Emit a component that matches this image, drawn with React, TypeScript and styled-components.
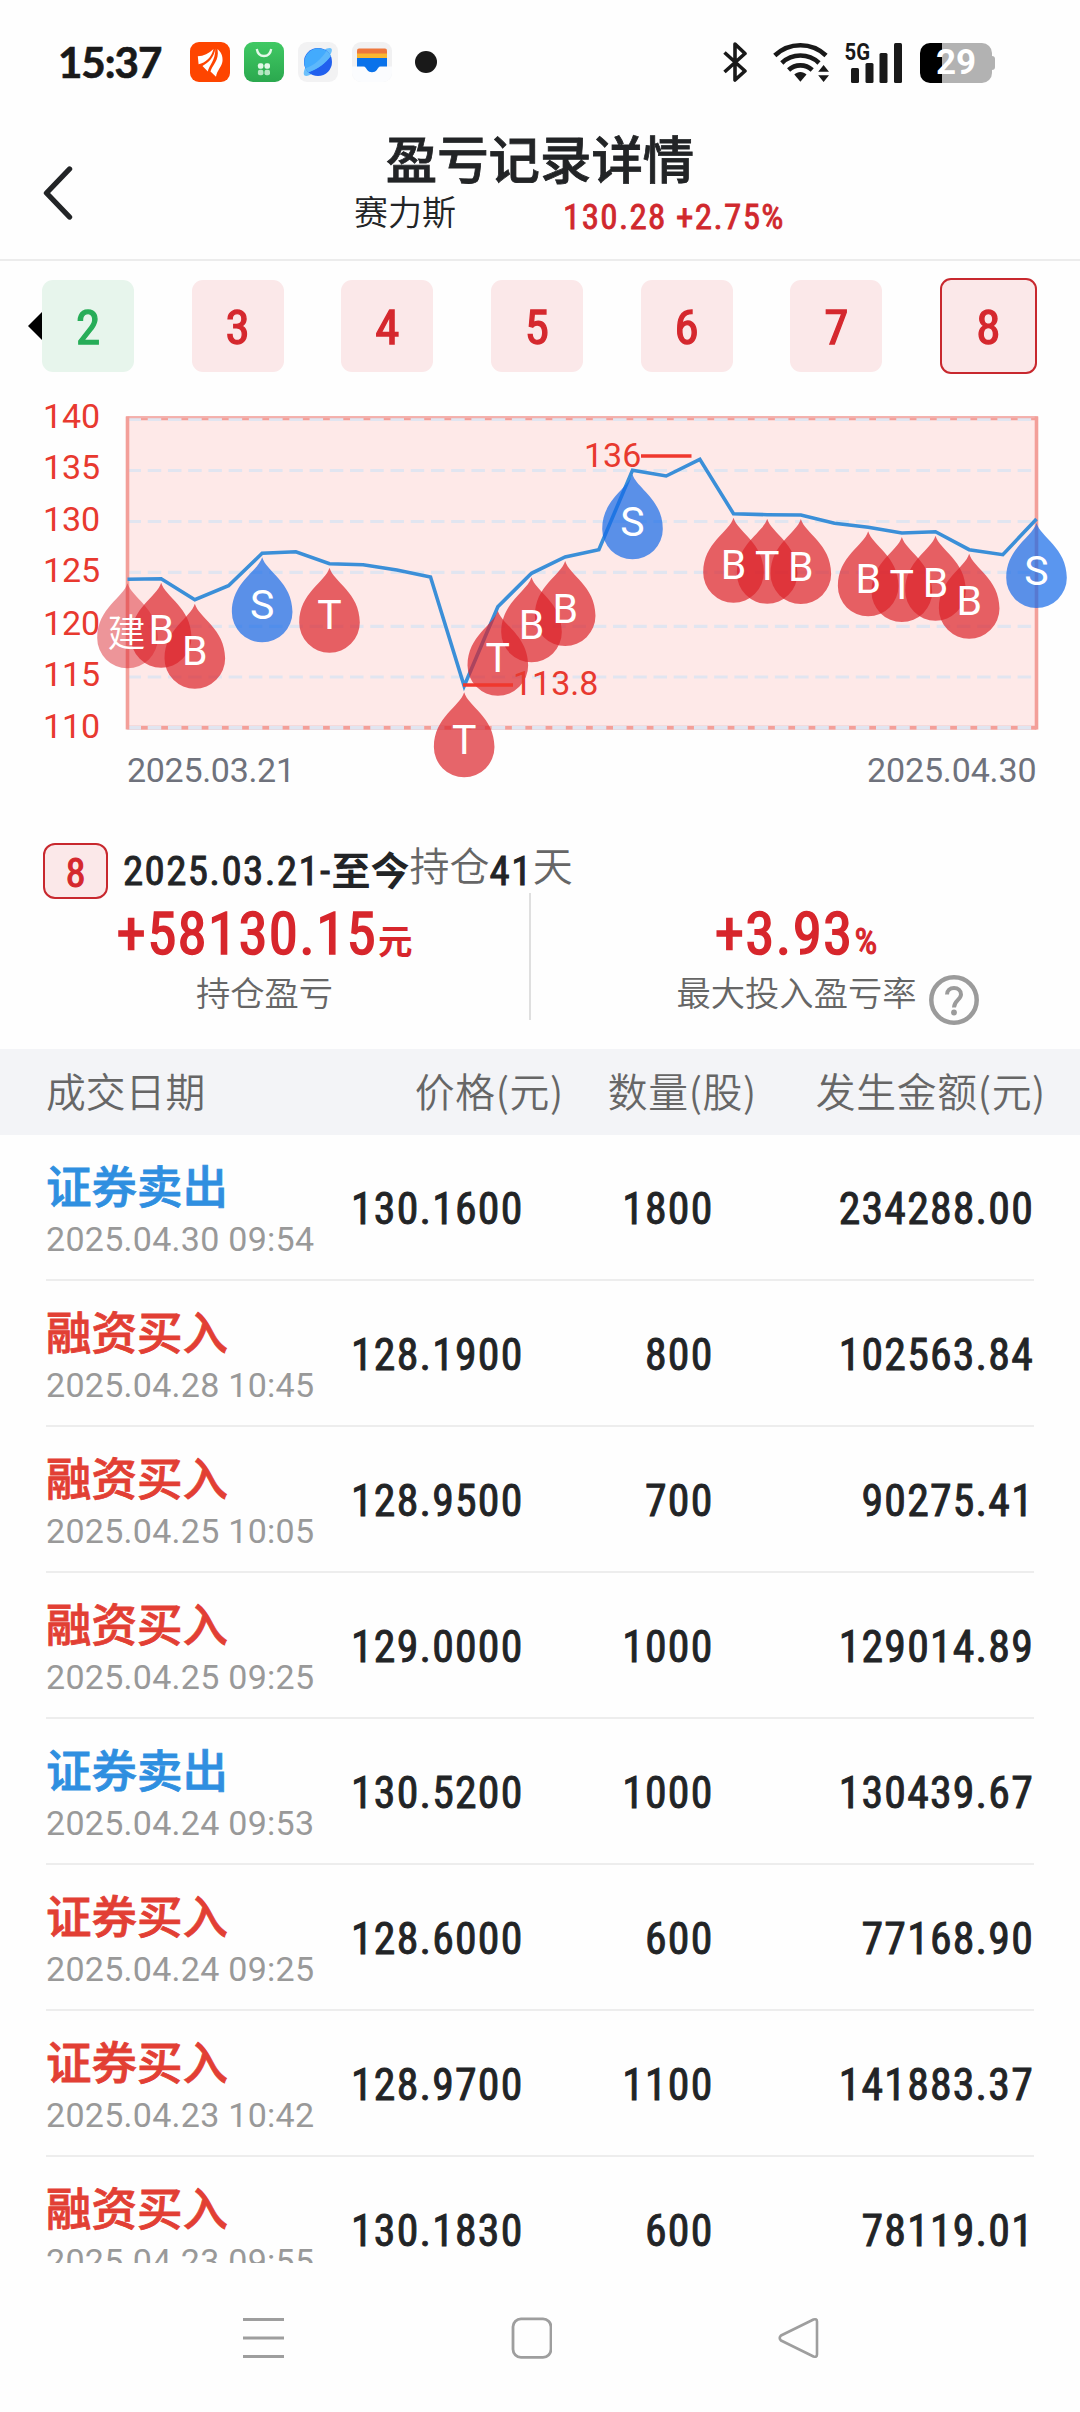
import React from 'react';
import styled, { createGlobalStyle, css } from 'styled-components';

const latin = 'Roboto, "Noto Sans CJK SC", sans-serif';
const han = '"Noto Sans CJK SC", sans-serif';

const GlobalStyle = createGlobalStyle`
  *, *::before, *::after { box-sizing: border-box; }
  html, body { margin: 0; padding: 0; background: #fefefe; }
  body { font-family: ${latin}; color: #222426; }
`;

/* narrow figures, a little heavier than regular */
const figures = (size: number, line: number, spacing: number, weight = 1) => css`
  font: 400 ${size}px/${line}px ${latin};
  font-stretch: 75%;
  letter-spacing: ${spacing}px;
  -webkit-text-stroke: ${weight}px currentColor;
`;

const Screen = styled.main`
  width: 1080px;
  height: 2412px;
  overflow: hidden;
  display: flex;
  flex-direction: column;
  background: #fefefe;
`;

/* ---------- status bar ---------- */
const StatusBar = styled.div`
  height: 124px;
  flex: none;
  display: flex;
  align-items: center;
  padding: 0 85px 0 58px;
`;
const Clock = styled.span`
  width: 132px;
  font: 700 42px/50px Lato, sans-serif;
  letter-spacing: -1px;
  color: #191919;
  -webkit-text-stroke: 0.7px #191919;
`;
const AppIcons = styled.div`
  display: flex;
  align-items: center;
  gap: 14px;
`;
const MoreDot = styled.span`
  width: 22px;
  height: 22px;
  margin-left: 9px;
  border-radius: 50%;
  background: #191919;
`;
const SystemIcons = styled.div`
  margin-left: auto;
  display: flex;
  align-items: center;
`;
const Slot = styled.div<{ $after: number }>`
  display: flex;
  margin-right: ${p => p.$after}px;
`;
const Battery = styled.div`
  display: flex;
  align-items: center;
  margin-top: 1px;
`;
const BatteryBody = styled.div`
  width: 72px;
  height: 40px;
  border-radius: 10px;
  background: linear-gradient(90deg, #000 22px, #b2b2b2 22px);
  color: #fff;
  font: 700 35px/40px Roboto, sans-serif;
  text-align: center;
`;
const BatteryTip = styled.div`
  width: 3px;
  height: 14px;
  border-radius: 0 4px 4px 0;
  background: #b2b2b2;
`;

/* ---------- title bar ---------- */
const TitleBar = styled.header`
  height: 137px;
  flex: none;
  display: grid;
  grid-template-columns: 100px 1fr 100px;
  border-bottom: 2px solid #ececec;
`;
const BackButton = styled.button`
  border: 0;
  padding: 2px 0 0 43px;
  background: none;
  display: flex;
  align-items: center;
`;
const TitleBlock = styled.div`
  display: flex;
  flex-direction: column;
  padding-top: 3px;
`;
const Title = styled.h1`
  margin: 0;
  font: 500 51.4px/60px ${han};
  -webkit-text-stroke: 0.8px currentColor;
  text-align: center;
  white-space: nowrap;
`;
const Quote = styled.div`
  display: flex;
  padding-left: 254px;
  gap: 107px;
`;
const StockName = styled.span`
  font: 350 34px/48px ${han};
`;
const StockPrice = styled.span`
  ${figures(35, 62, 1.35, 0.8)}
  color: #d0282d;
`;

/* ---------- round tabs ---------- */
const TabStrip = styled.nav`
  height: 113px;
  flex: none;
  padding: 17px 43px 0 28px;
  display: flex;
  align-items: center;
`;
const Tabs = styled.div`
  flex: 1;
  display: flex;
  align-items: center;
  justify-content: space-between;
`;
const Tab = styled.button<{ $tone: 'gain' | 'loss'; $active?: boolean }>`
  width: ${p => (p.$active ? 97 : 92)}px;
  height: ${p => (p.$active ? 96 : 92)}px;
  padding: 3px 0 0;
  border: ${p => (p.$active ? '2px solid #c8282e' : '0')};
  border-radius: 11px;
  background: ${p => (p.$tone === 'gain' ? '#fbe8e9' : '#e7f5ec')};
  color: ${p => (p.$tone === 'gain' ? '#d5282e' : '#27ad58')};
  ${figures(49, 50, 0, 1.3)}
`;

const Chart = styled.svg`
  display: block;
  flex: none;
`;

/* ---------- holding summary ---------- */
const Period = styled.div`
  height: 55px;
  flex: none;
  margin-top: 33px;
  padding-left: 43px;
  display: flex;
  align-items: center;
`;
const PeriodBadge = styled.span`
  width: 65px;
  height: 56px;
  margin-right: 15px;
  padding-top: 4px;
  border: 2px solid #c8282e;
  border-radius: 12px;
  background: #fbe8e9;
  color: #d5282e;
  ${figures(40, 50, 0, 1.1)}
  text-align: center;
`;
const PeriodNumber = styled.span`
  ${figures(41, 55, 1.35, 0.9)}
  padding-top: 1px;
`;
const PeriodNow = styled.span`
  font: 700 39px/55px ${han};
  padding-bottom: 4px;
`;
const PeriodWord = styled.span`
  font: 350 40px/55px ${han};
  color: #666;
  padding-bottom: 12px;
`;
const Stats = styled.section`
  height: 127px;
  flex: none;
  margin: -5px 0 29px;
  display: grid;
  grid-template-columns: 529px 2px 530px;
  grid-template-rows: 127px;
`;
const Stat = styled.div`
  padding-top: 6px;
  display: flex;
  flex-direction: column;
  align-items: center;
`;
const Divider = styled.div`
  background: #dfdfdf;
`;
const StatValue = styled.div`
  display: flex;
  align-items: baseline;
  color: #d7262c;
  ${figures(59, 70, 1.3, 1.5)}
`;
const StatUnit = styled.span<{ $han?: boolean }>`
  margin-left: 1px;
  font: ${p => (p.$han ? `700 34.5px/34px ${han}` : `400 36px/36px ${latin}`)};
  font-stretch: ${p => (p.$han ? 'normal' : '80%')};
  letter-spacing: 0;
  -webkit-text-stroke: ${p => (p.$han ? 0 : 1)}px currentColor;
`;
const StatLabel = styled.div`
  display: flex;
  align-items: flex-start;
  font: 350 34.3px/45px ${han};
  color: #666;
`;
const HelpIcon = styled.svg`
  margin: 6px -63px 0 12px;
`;

/* ---------- trades ---------- */
const TableHead = styled.div`
  height: 86px;
  flex: none;
  padding: 0 34px 4px 46px;
  display: grid;
  grid-template-columns: 200px 318px 193px 289px;
  align-items: center;
  background: #f3f4f7;
  color: #666;
  font: 350 39.8px/60px ${han};
`;
const HeadCell = styled.span<{ $right?: boolean }>`
  text-align: ${p => (p.$right ? 'right' : 'left')};
  letter-spacing: ${p => (p.$right ? 0.7 : 0)}px;
  white-space: nowrap;
`;
const TradeList = styled.div`
  height: 1128px;
  flex: none;
  overflow: hidden;
  padding: 0 46px;
`;
const TradeRow = styled.div`
  height: 146px;
  display: grid;
  grid-template-columns: 280px 197.5px 190px 320.5px;
  border-bottom: 2px solid #ededed;
`;
const TradeKind = styled.div`
  padding-top: 21px;
  white-space: nowrap;
`;
const TradeType = styled.div<{ $sell: boolean }>`
  font: 500 45.5px/57px ${han};
  -webkit-text-stroke: 0.8px currentColor;
  color: ${p => (p.$sell ? '#2f8fe0' : '#e23f34')};
`;
const TradeTime = styled.div`
  margin-top: 6px;
  font: 400 34px/40px ${latin};
  letter-spacing: 0.28px;
  color: #999;
`;
const TradeNumber = styled.span`
  ${figures(43.8, 148, 1.2, 0.9)}
  text-align: right;
`;

/* ---------- system navigation ---------- */
const NavBar = styled.footer`
  flex: 1;
  display: flex;
  align-items: center;
  gap: 226.5px;
  padding-left: 243px;
`;

/* ---------- chart data ---------- */
const LEFT = 127.5;
const STEP = 33.667;
const lineY = [
  579.3, 578.7, 599.7, 585.7, 553.3, 551.7, 563.7, 564.7, 570, 577, 686, 606.7, 573.3, 557,
  549.7, 470.3, 476, 459.3, 513.7, 514.7, 515, 523.3, 527.3, 533, 531.7, 549.7, 554.7, 519,
];
const px = (i: number) => LEFT + STEP * i;
const LOW = 10;
const tipY = (i: number) => lineY[i] + (i === LOW ? 6.3 : 4);
const marks: [number, string][] = [
  [0, '建'], [1, 'B'], [2, 'B'], [4, 'S'], [6, 'T'], [10, 'T'], [11, 'T'], [12, 'B'], [13, 'B'],
  [15, 'S'], [18, 'B'], [19, 'T'], [20, 'B'], [22, 'B'], [23, 'T'], [24, 'B'], [25, 'B'], [27, 'S'],
];
const markFill = (label: string) =>
  label === 'S' ? 'rgba(20,106,232,.7)' : label === '建' ? 'rgba(219,36,43,.48)' : 'rgba(219,36,43,.7)';
const axis: [string, number][] = [
  ['140', 428], ['135', 479], ['130', 531], ['125', 582], ['120', 634.5], ['115', 686], ['110', 738],
];
const grid = [419.5, 470.5, 521.5, 572.3, 626.3, 677, 727.7];

function PriceChart() {
  return (
    <Chart width="1080" height="436" viewBox="0 374 1080 436" fontFamily="Roboto, sans-serif">
      <rect x="127.5" y="418" width="909" height="310" fill="#fee9e8" />
      <path d="M127.5 418.2H1036.5M127.5 727.7H1036.5" stroke="#f39f99" strokeWidth="4" />
      {grid.map(y => (
        <path key={y} d={`M127.5 ${y}H1036.5`} stroke="#e1e5f0" strokeWidth={y > 700 ? 4 : 3.2} strokeDasharray="13.5 6.73" />
      ))}
      <path d="M126 417.2H1038" stroke="#f3b0ac" strokeWidth="2" />
      <path d="M127.5 416.5V729.5M1036.5 416.5V729.5" stroke="#f39f99" strokeWidth="3.6" />
      {axis.map(([t, y]) => (
        <text key={t} x="100" y={y} textAnchor="end" fontSize="34" fill="#e8392f" textLength="57">{t}</text>
      ))}
      <polyline
        points={lineY.map((y, i) => `${px(i)},${y}`).join(' ')}
        fill="none" stroke="#3b8fd8" strokeWidth="3.6" strokeLinejoin="miter"
      />
      {marks.map(([i, t]) => (
        <path
          key={i}
          transform={`translate(${px(i)} ${tipY(i)})`}
          d="M0 0C4 14 30.3 25 30.3 54.7A30.3 30.3 0 0 1-30.3 54.7C-30.3 25-4 14 0 0Z"
          fill={markFill(t)}
        />
      ))}
      {marks.map(([i, t]) => (
        <text
          key={i} x={px(i) - (t === '建' ? 1 : 0)} y={tipY(i) + (t === '建' ? 62.5 : 61.5)}
          textAnchor="middle" fill="#fff" fontSize={t === '建' ? 38 : 41}
          fontFamily={t === '建' ? '"Noto Sans CJK SC", sans-serif' : 'Roboto, sans-serif'}
          fontWeight={t === '建' ? 350 : 400}
        >{t}</text>
      ))}
      <path d="M641 456H691.5M463 685H513" stroke="#f0382e" strokeWidth="3.4" />
      <text x="584" y="466.500" fontSize="34" fill="#e8392f">136</text>
      <text x="513" y="695" fontSize="34" fill="#e8392f">113.8</text>
      <text x="127" y="782" fontSize="34" fill="#6f727c" textLength="168">2025.03.21</text>
      <text x="1036.5" y="782" fontSize="34" fill="#6f727c" textAnchor="end" textLength="169.5">2025.04.30</text>
    </Chart>
  );
}

const BrokerIcon = () => (
  <svg width="40" height="40" viewBox="0 0 40 40">
    <rect width="40" height="40" rx="9" fill="#fe4500" />
    <g fill="#fff">
      <path d="M23.5 7C19 11.5 13.5 14 7.8 14.3L8.6 22.2C15.5 21 21.5 15.500 23.500 7Z" />
      <path d="M25.3 6.5C24.5 15 18.500 20.500 12.500 24L17.800 29.500C19 23 25.500 19 25.300 6.500Z" />
      <path d="M27.500 7C31 10 33 14 32.500 19C32 25 27 28 26 34.800L20.500 29.500C22 23 29.500 19 27.500 7Z" />
    </g>
  </svg>
);

const StoreIcon = () => (
  <svg width="40" height="40" viewBox="0 0 40 40">
    <defs>
      <linearGradient id="store" x1="0" y1="0" x2="0" y2="1">
        <stop offset="0" stopColor="#40c964" />
        <stop offset="1" stopColor="#2ba84e" />
      </linearGradient>
    </defs>
    <rect width="40" height="40" rx="9" fill="url(#store)" />
    <path d="M12.8 7C13.5 11.5 16.2 14 20 14S26.5 11.5 27.2 7" fill="none" stroke="#e4f9e9" strokeWidth="2.3" />
    <g fill="#e2f8e7">
      <rect x="13.9" y="21.2" width="5.500" height="5.500" rx="2" />
      <rect x="20.500" y="21.200" width="5.500" height="5.500" rx="2" />
      <rect x="13.900" y="27.800" width="5.500" height="5.500" rx="2" opacity=".75" />
      <rect x="20.500" y="27.800" width="5.500" height="5.500" rx="2" opacity=".75" />
    </g>
  </svg>
);

const BrowserIcon = () => (
  <svg width="40" height="40" viewBox="0 0 40 40">
    <rect width="40" height="40" rx="9" fill="#f2f2f3" />
    <path d="M25.500 8.500C29 6 32.500 5.500 33.500 6.800C34.500 8.200 33.500 11 31.500 14Z" fill="#6cc0fb" />
    <path d="M7.500 25C5.500 29 5.300 32.500 6.500 33.500C8 34.700 11.500 33.500 14.500 31.500Z" fill="#6cc0fb" />
    <circle cx="20" cy="20" r="14" fill="#2160ee" />
    <path d="M32.800 14A14 14 0 1 0 10.500 30.300C19 27.500 28 21 32.800 14Z" fill="#43abfd" />
    <path d="M32.800 14A14 14 0 0 0 28.500 9C24 16.500 15 24.500 7.400 26.200A14 14 0 0 0 10.500 30.300C19 27.500 28 21 32.800 14Z" fill="#5db8fb" />
  </svg>
);

const WalletIcon = () => (
  <svg width="40" height="40" viewBox="0 0 40 40">
    <rect width="40" height="40" rx="9" fill="#f1f1f2" />
    <path d="M0 24.500H40V31A9 9 0 0 1 31 40H9A9 9 0 0 1 0 31Z" fill="#fbfcfe" />
    <path d="M5 12V8.500A2 2 0 0 1 7 6.500H33A2 2 0 0 1 35 8.500V12Z" fill="#ee773c" />
    <path d="M5 11.500H35V17H5Z" fill="#fbb731" />
    <path d="M5 16H35V24.500H28.500C26.500 24.500 26 26.500 24.800 28C22.500 31 17.500 31 15.200 28C14 26.500 13.500 24.500 11.500 24.500H5Z" fill="#0a72ea" />
  </svg>
);

const BluetoothIcon = () => (
  <svg width="24" height="40" viewBox="0 0 24 40" fill="none" stroke="#191919" strokeWidth="3.6" strokeLinejoin="round">
    <path d="M1.500 10.500L22 29L12 38V2L22 11.500L1.500 30" />
  </svg>
);

const WifiIcon = () => (
  <svg width="56" height="40" viewBox="0 0 56 40">
    <g fill="none" stroke="#191919" strokeWidth="4.6">
      <path d="M1.800 13.500A37 37 0 0 1 53 13.500" />
      <path d="M8.800 21A27 27 0 0 1 46 21" />
      <path d="M15.600 28A17.500 17.500 0 0 1 39.200 28" />
    </g>
    <path d="M21.300 32.500C24.500 29 30.300 29 33.500 32.500L27.400 39.800Z" fill="#191919" />
    <path d="M50.600 23L56 29.800H45.200ZM50.600 40L56 33.300H45.200Z" fill="#191919" />
  </svg>
);

const SignalIcon = () => (
  <svg width="58" height="41" viewBox="-1 0 58 41" fill="#191919" overflow="visible">
    <text x="-0.500" y="18" fontFamily="Roboto, sans-serif" fontSize="24.500" fontWeight="700" textLength="25.500" lengthAdjust="spacingAndGlyphs">5G</text>
    <rect x="6" y="26" width="8" height="15" rx="1.500" />
    <rect x="20.500" y="21" width="8" height="20" rx="1.500" />
    <rect x="34.500" y="11" width="8" height="30" rx="1.500" />
    <rect x="49" y="1" width="8" height="40" rx="1.500" />
  </svg>
);

const trades = [
  ['证券卖出', '2025.04.30 09:54', '130.1600', '1800', '234288.00'],
  ['融资买入', '2025.04.28 10:45', '128.1900', '800', '102563.84'],
  ['融资买入', '2025.04.25 10:05', '128.9500', '700', '90275.41'],
  ['融资买入', '2025.04.25 09:25', '129.0000', '1000', '129014.89'],
  ['证券卖出', '2025.04.24 09:53', '130.5200', '1000', '130439.67'],
  ['证券买入', '2025.04.24 09:25', '128.6000', '600', '77168.90'],
  ['证券买入', '2025.04.23 10:42', '128.9700', '1100', '141883.37'],
  ['融资买入', '2025.04.23 09:55', '130.1830', '600', '78119.01'],
];

export default function App() {
  return (
    <Screen>
      <GlobalStyle />
      <StatusBar>
        <Clock>15:37</Clock>
        <AppIcons>
          <BrokerIcon />
          <StoreIcon />
          <BrowserIcon />
          <WalletIcon />
          <MoreDot />
        </AppIcons>
        <SystemIcons>
          <Slot $after={26}><BluetoothIcon /></Slot>
          <Slot $after={15}><WifiIcon /></Slot>
          <Slot $after={18}><SignalIcon /></Slot>
          <Battery>
            <BatteryBody>29</BatteryBody>
            <BatteryTip />
          </Battery>
        </SystemIcons>
      </StatusBar>

      <TitleBar>
        <BackButton aria-label="返回">
          <svg width="30" height="54" viewBox="0 0 30 54" fill="none" stroke="#222426" strokeWidth="5.4" strokeLinecap="round" strokeLinejoin="round">
            <path d="M26.500 3L3.500 27L26.500 51" />
          </svg>
        </BackButton>
        <TitleBlock>
          <Title>盈亏记录详情</Title>
          <Quote>
            <StockName>赛力斯</StockName>
            <StockPrice>130.28 +2.75%</StockPrice>
          </Quote>
        </TitleBlock>
      </TitleBar>

      <TabStrip>
        <svg width="14" height="28" viewBox="0 0 14 28"><path d="M14 0V28L0 14Z" /></svg>
        <Tabs>
          {[2, 3, 4, 5, 6, 7, 8].map(n => (
            <Tab key={n} $tone={n === 2 ? 'loss' : 'gain'} $active={n === 8}>{n}</Tab>
          ))}
        </Tabs>
      </TabStrip>

      <PriceChart />

      <Period>
        <PeriodBadge>8</PeriodBadge>
        <PeriodNumber>2025.03.21-</PeriodNumber>
        <PeriodNow>至今</PeriodNow>
        <PeriodWord>持仓</PeriodWord>
        <PeriodNumber>41</PeriodNumber>
        <PeriodWord>天</PeriodWord>
      </Period>

      <Stats>
        <Stat>
          <StatValue>+58130.15<StatUnit $han>元</StatUnit></StatValue>
          <StatLabel>持仓盈亏</StatLabel>
        </Stat>
        <Divider />
        <Stat>
          <StatValue>+3.93<StatUnit>%</StatUnit></StatValue>
          <StatLabel>
            最大投入盈亏率
            <HelpIcon width="50" height="50" viewBox="0 0 50 50" fill="none" stroke="#9b9b9b">
              <circle cx="25" cy="25" r="22.700" strokeWidth="4.500" />
              <path d="M18 19.500C18 15.500 21 13 25 13S32 15.500 32 19.500C32 24.500 25 25.500 25 32.500" strokeWidth="4" />
              <circle cx="25" cy="37.500" r="2.900" fill="#9b9b9b" stroke="none" />
            </HelpIcon>
          </StatLabel>
        </Stat>
      </Stats>

      <TableHead>
        <HeadCell>成交日期</HeadCell>
        <HeadCell $right>价格(元)</HeadCell>
        <HeadCell $right>数量(股)</HeadCell>
        <HeadCell $right>发生金额(元)</HeadCell>
      </TableHead>
      <TradeList>
        {trades.map(([type, time, price, qty, amount]) => (
          <TradeRow key={time}>
            <TradeKind>
              <TradeType $sell={type.endsWith('卖出')}>{type}</TradeType>
              <TradeTime>{time}</TradeTime>
            </TradeKind>
            <TradeNumber>{price}</TradeNumber>
            <TradeNumber>{qty}</TradeNumber>
            <TradeNumber>{amount}</TradeNumber>
          </TradeRow>
        ))}
      </TradeList>

      <NavBar>
        <svg width="41" height="42" viewBox="0 0 41 42" stroke="#9e9e9e" strokeWidth="3"><path d="M0 2.500H41M0 21H41M0 39.500H41" /></svg>
        <svg width="41" height="42" viewBox="0 0 41 42" fill="none" stroke="#9e9e9e" strokeWidth="2.8"><rect x="2" y="1.800" width="38" height="38.500" rx="8" /></svg>
        <svg width="41" height="42" viewBox="0 0 41 42" fill="none" stroke="#9e9e9e" strokeWidth="2.6" strokeLinejoin="round">
          <path d="M35.500 2.500L3 18.500Q.500 21 3 23.500L35.500 39.500Q39 40.500 39 37.500V4.500Q39 1.500 35.500 2.500Z" />
        </svg>
      </NavBar>
    </Screen>
  );
}
